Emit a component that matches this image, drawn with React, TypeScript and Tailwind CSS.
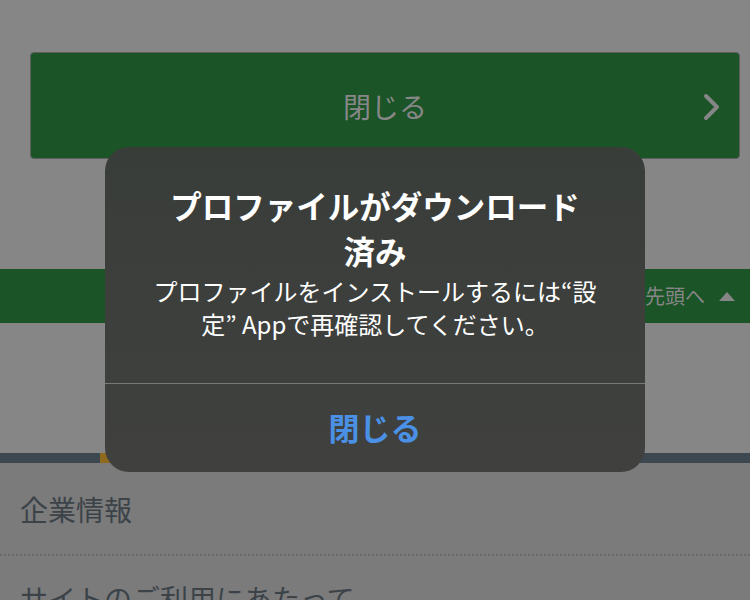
import React from "react";

const jp = { fontFamily: '"Noto Sans CJK JP", "Noto Sans", sans-serif' };

export default function App() {
  return (
    <div className="relative w-[750px] h-[600px] overflow-hidden bg-[#868686]" style={jp}>
      <div className="pt-[52px] pl-[30px] pr-[10px]">
        <div className="relative h-[107px] rounded-[4px] border border-[#5e5e5e] bg-[#1a5427] flex items-center justify-center">
          <span className="text-[28px] leading-none text-[#878787]">閉じる</span>
          <svg className="absolute right-[18px] top-[40px]" width="18" height="28" viewBox="0 0 18 28">
            <path d="M3 3 L14 14 L3 25" fill="none" stroke="#868686" strokeWidth="4" strokeLinecap="round" strokeLinejoin="round" />
          </svg>
        </div>
      </div>
      <div className="mt-[110px] h-[54px] bg-[#1a5427] flex items-center justify-end pr-[15px] gap-[14px]">
        <span className="text-[20px] leading-none text-[#868686]">先頭へ</span>
        <svg width="16" height="10" viewBox="0 0 16 10">
          <path d="M0 10 L8 1 L16 10 Z" fill="#868686" />
        </svg>
      </div>
      <div className="h-[130px]" />
      <div className="h-[10px] bg-[#3c4750] flex">
        <div className="ml-[100px] w-[40px] bg-[#8e6a1e]" />
      </div>
      <div className="bg-[#7b7b7b] h-[200px]">
        <div className="h-[93px] flex items-center pl-[20px] border-b-2 border-dotted border-[#6a6a6a]">
          <span className="text-[28px] leading-none text-[#3b4349]">企業情報</span>
        </div>
        <div className="pl-[20px] pt-[28px]">
          <span className="text-[28px] leading-none text-[#3b4349]">サイトのご利用にあたって</span>
        </div>
      </div>

      <div className="absolute left-[105px] top-[147px] w-[540px] h-[325px] rounded-[24px] bg-gradient-to-b from-[#393d3a] to-[#40413e] overflow-hidden flex flex-col">
        <div className="pt-[36px] px-[40px] text-center">
          <div className="text-[31.5px] leading-[45px] font-bold text-white">
            プロファイルがダウンロード<br />済み
          </div>
          <div className="mt-[1px] text-[24px] leading-[33px] text-white">
            プロファイルをインストールするには“設<br />定” Appで再確認してください。
          </div>
        </div>
        <div className="mt-auto h-[89px] border-t border-[#777a77] flex items-center justify-center">
          <span className="text-[31px] leading-none font-semibold text-[#4a91e6] -translate-y-[2px]">閉じる</span>
        </div>
      </div>
    </div>
  );
}
